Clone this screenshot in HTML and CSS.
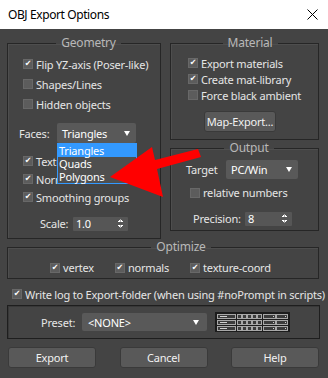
FILE: index.html
```html
<!DOCTYPE html>
<html lang="en">

<head>
  <meta charset="UTF-8" />
  <title>OBJ Export Options</title>
  <link rel="stylesheet" href="styles.css">
</head>

<body>

  <div class="titlebar">
    <span>OBJ Export Options</span>
    <svg class="close" width="11" height="11" viewBox="0 0 11 11">
      <path d="M0.5 0.5 L10.5 10.5 M10.5 0.5 L0.5 10.5" stroke="#000" stroke-width="1" fill="none" />
    </svg>
  </div>

  <div class="dialog">
    <div class="top">

      <fieldset class="group geometry">
        <legend>Geometry</legend>
        <div class="check on"><span class="box"></span>Flip YZ-axis (Poser-like)</div>
        <div class="check"><span class="box"></span>Shapes/Lines</div>
        <div class="check"><span class="box"></span>Hidden objects</div>
        <div class="field faces-row">
          <span class="label">Faces:</span>
          <div class="select faces">
            Triangles
            <div class="list">
              <div class="item active">Triangles</div>
              <div class="item">Quads</div>
              <div class="item">Polygons</div>
            </div>
          </div>
        </div>
        <div class="check small on first"><span class="box"></span>Textures</div>
        <div class="check small on"><span class="box"></span>Normals</div>
        <div class="check small on"><span class="box"></span>Smoothing groups</div>
        <div class="field scale-row">
          <span class="label">Scale:</span>
          <div class="spinner scale">1.0</div>
        </div>
      </fieldset>

      <div class="side">
        <fieldset class="group material">
          <legend>Material</legend>
          <div class="check on"><span class="box"></span>Export materials</div>
          <div class="check on"><span class="box"></span>Create mat-library</div>
          <div class="check"><span class="box"></span>Force black ambient</div>
          <button class="btn map-btn">Map-Export...</button>
        </fieldset>

        <fieldset class="group output">
          <legend>Output</legend>
          <div class="field target-row">
            <span class="label">Target</span>
            <div class="select target">PC/Win</div>
          </div>
          <div class="check relative"><span class="box"></span>relative numbers</div>
          <div class="field precision-row">
            <span class="label">Precision:</span>
            <div class="spinner precision">8</div>
          </div>
        </fieldset>
      </div>

    </div>

    <fieldset class="group optimize">
      <legend>Optimize</legend>
      <div class="opt-row">
        <div class="check on"><span class="box"></span>vertex</div>
        <div class="check on"><span class="box"></span>normals</div>
        <div class="check on"><span class="box"></span>texture-coord</div>
      </div>
    </fieldset>

    <div class="check on write-log"><span class="box"></span>Write log to Export-folder (when using #noPrompt in scripts)</div>

    <div class="preset">
      <span class="label">Preset:</span>
      <div class="select preset-select">&lt;NONE&gt;</div>
      <svg class="preset-icon" width="75" height="20" viewBox="0 0 75 20">
        <rect x="0" y="0" width="75" height="20" fill="#1c1c1c" />
        <g fill="#3b3b3b" stroke="#a8a8a8" stroke-width="1">
          <rect x="2.5" y="2.5" width="18" height="4" />
          <rect x="2.5" y="8.5" width="18" height="4" />
          <rect x="2.5" y="14.5" width="18" height="4" />

          <rect x="22.5" y="2.5" width="4" height="4" />
          <rect x="27.5" y="2.5" width="4" height="4" />
          <rect x="32.5" y="2.5" width="4" height="4" />
          <rect x="37.5" y="2.5" width="4" height="4" />
          <rect x="42.5" y="2.5" width="4" height="4" />
          <rect x="22.5" y="8.5" width="4" height="4" />
          <rect x="27.5" y="8.5" width="4" height="4" />
          <rect x="32.5" y="8.5" width="4" height="4" />
          <rect x="37.5" y="8.5" width="4" height="4" />
          <rect x="42.5" y="8.5" width="4" height="4" />
          <rect x="22.5" y="14.5" width="4" height="4" />
          <rect x="27.5" y="14.5" width="4" height="4" />
          <rect x="32.5" y="14.5" width="4" height="4" />
          <rect x="37.5" y="14.5" width="4" height="4" />
          <rect x="42.5" y="14.5" width="4" height="4" />

          <rect x="48.5" y="2.5" width="12" height="4" />
          <rect x="48.5" y="8.5" width="12" height="4" />
          <rect x="48.5" y="14.5" width="12" height="4" />
          <rect x="61.5" y="2.5" width="11" height="4" />
          <rect x="61.5" y="8.5" width="11" height="4" />
          <rect x="61.5" y="14.5" width="11" height="4" />
        </g>
        <g fill="#d0d0d0">
          <rect x="5" y="4" width="7" height="1" />
          <rect x="5" y="10" width="7" height="1" />
          <rect x="5" y="16" width="7" height="1" />
          <rect x="58" y="4" width="1" height="1" />
          <rect x="58" y="10" width="1" height="1" />
          <rect x="58" y="16" width="1" height="1" />
          <rect x="70" y="4" width="1" height="1" />
          <rect x="70" y="10" width="1" height="1" />
          <rect x="70" y="16" width="1" height="1" />
        </g>
      </svg>
    </div>

    <div class="buttons">
      <button class="btn">Export</button>
      <button class="btn">Cancel</button>
      <button class="btn">Help</button>
    </div>
  </div>

  <!-- annotation arrow drawn over the dialog -->
  <svg class="arrow" width="328" height="378" viewBox="0 0 328 378">
    <polygon points="110,177 152,147 155,160 198,149 201,157 157,169 163,197" fill="#ff0000" />
  </svg>

</body>

</html>
```

FILE: styles.css
```css
* {
  box-sizing: border-box;
}

body {
  margin: 0;
  width: 328px;
  height: 378px;
  overflow: hidden;
  position: relative;
  background-color: #444444;
  font-family: "Noto Sans", sans-serif;
  font-size: 11px;
  letter-spacing: -0.2px;
  color: #e6e6e6;
}

.titlebar {
  height: 29px;
  background-color: #ffffff;
  color: #000;
  display: flex;
  align-items: center;
  justify-content: space-between;
  padding: 0 10px 0 8px;
  font-size: 12px;
  letter-spacing: -0.4px;
}

.dialog {
  padding: 6px 9px 0 7px;
}

.top {
  display: grid;
  grid-template-columns: 154px 149px;
  column-gap: 9px;
  align-items: start;
}

fieldset.group {
  margin: 0;
  min-width: 0;
  border: 1px solid #262626;
  box-shadow: inset 1px 1px 0 #4e4e4e;
}

legend {
  margin: 0 auto;
  padding: 0 5px;
  line-height: 16px;
  font-size: 12px;
  color: #b8b8b8;
}

/* checkboxes */
.check {
  display: flex;
  align-items: center;
  gap: 3px;
  height: 20px;
  white-space: nowrap;
}

.box {
  width: 10px;
  height: 10px;
  flex: none;
  background-color: #5c5c5c;
  border: 1px solid #686868;
  display: flex;
  align-items: center;
  justify-content: center;
  font-family: "DejaVu Sans", sans-serif;
  font-size: 8px;
  letter-spacing: 0;
  line-height: 1;
  color: #fff;
}

.check.on .box::after {
  content: "\2714";
}

/* selects and spinners */
.field {
  display: flex;
  align-items: center;
}

.select {
  display: flex;
  align-items: center;
  justify-content: space-between;
  background-color: #595959;
  border-radius: 2px;
  padding: 0 6px 0 5px;
  color: #fff;
  position: relative;
  white-space: nowrap;
}

.select::after {
  content: "";
  border-left: 3.5px solid transparent;
  border-right: 3.5px solid transparent;
  border-top: 5px solid #fff;
}

.spinner {
  display: flex;
  align-items: center;
  justify-content: space-between;
  height: 14px;
  background-color: #565656;
  border-radius: 1px;
  padding: 0 5px 0 3px;
  color: #fff;
}

.spinner::after {
  content: "";
  width: 5px;
  height: 9px;
  background:
    linear-gradient(to bottom right, transparent 50%, #fff 50%) 0 0 / 2.5px 3px no-repeat,
    linear-gradient(to bottom left, transparent 50%, #fff 50%) 2.5px 0 / 2.5px 3px no-repeat,
    linear-gradient(to top right, transparent 50%, #fff 50%) 0 6px / 2.5px 3px no-repeat,
    linear-gradient(to top left, transparent 50%, #fff 50%) 2.5px 6px / 2.5px 3px no-repeat;
}

/* geometry */
.geometry {
  padding: 3px 6px 7px 15px;
}

.faces-row {
  margin: 9px 0 9px -4px;
}

.faces-row .label {
  width: 38px;
}

.select.faces {
  width: 79px;
  height: 20px;
}

.list {
  position: absolute;
  top: 100%;
  left: 0;
  width: 80px;
  background-color: #4f4f4f;
  border: 1px solid #3399ff;
  z-index: 5;
}

.list .item {
  height: 13px;
  line-height: 13px;
  padding-left: 1px;
  color: #fff;
}

.list .item.active {
  background-color: #3399ff;
}

.check.small {
  height: 18px;
}

.scale-row {
  margin-top: 10px;
  padding-left: 17px;
}

.scale-row .label {
  width: 33px;
}

.spinner.scale {
  width: 55px;
}

/* material */
.material {
  padding: 4px 6px 7px 17px;
}

.material .check {
  height: 16px;
}

.btn {
  font-family: "Noto Sans", sans-serif;
  font-size: 11px;
  letter-spacing: -0.2px;
  color: #f2f2f2;
  background-color: #595959;
  border: 1px solid #3a3a3a;
  border-radius: 3px;
  height: 21px;
  padding: 0;
  white-space: nowrap;
}

.map-btn {
  display: block;
  width: 72px;
  margin: 8px 0 0 16px;
}

/* output */
.output {
  margin-top: 8px;
  padding: 4px 6px 4px 15px;
}

.target-row .label {
  width: 40px;
}

.select.target {
  width: 72px;
  height: 19px;
}

.check.relative {
  height: 17px;
  margin: 5px 0 0 4px;
}

.precision-row {
  margin: 10px 0 0 7px;
}

.precision-row .label {
  width: 52px;
}

.spinner.precision {
  width: 47px;
}

/* optimize */
.optimize {
  margin-top: 5px;
  padding: 4px 6px 2px 42px;
}

.opt-row {
  display: flex;
  gap: 21px;
}

.opt-row .check {
  height: 17px;
}

.write-log {
  margin: 7px 0 0 5px;
  height: 16px;
}

/* preset */
.preset {
  margin: 3px -1px 0 0;
  height: 34px;
  border: 1px solid #1e1e1e;
  box-shadow: inset 1px 1px 0 #383838;
  display: flex;
  align-items: center;
  padding-left: 33px;
}

.preset .label {
  width: 41px;
}

.select.preset-select {
  width: 125px;
  height: 18px;
  padding-left: 6px;
  padding-right: 8px;
}

.preset-icon {
  margin-left: 8px;
}

/* buttons */
.buttons {
  display: flex;
  justify-content: space-between;
  margin-top: 8px;
  padding-left: 1px;
}

.buttons .btn {
  width: 88px;
}

.arrow {
  position: absolute;
  top: 0;
  left: 0;
  z-index: 10;
  pointer-events: none;
}
```
